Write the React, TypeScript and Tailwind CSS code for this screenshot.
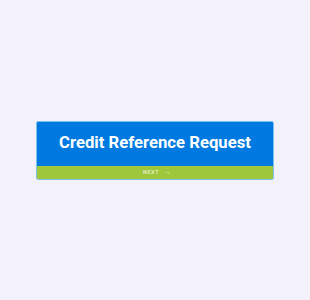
import React from "react";

const App = () => {
  return (
    <div className="w-[310px] h-[300px] bg-[#f3f2fb] flex items-center justify-center" style={{ fontFamily: "Roboto, 'Liberation Sans', sans-serif" }}>
      <div className="w-[238px] mt-[1px] rounded-[2px] border border-[#7cc0ee] overflow-hidden flex flex-col">
        <div className="h-[44px] bg-[#0079e0] flex items-center justify-center pb-[1px]">
          <h1 className="text-white font-bold text-[16.7px] leading-none">Credit Reference Request</h1>
        </div>
        <div className="h-[13px] bg-[#9fc73c] flex items-center justify-center gap-[5px] text-[#e8f2d0] pl-[4px]">
          <span className="text-[5.5px] tracking-[0.6px] font-medium leading-none">NEXT</span>
          <span className="text-[7px] leading-none">→</span>
        </div>
      </div>
    </div>
  );
};

export default App;
